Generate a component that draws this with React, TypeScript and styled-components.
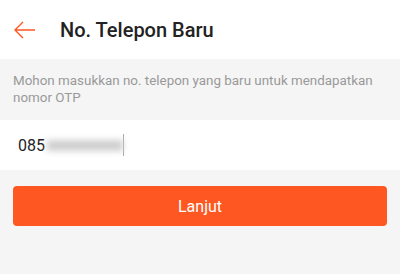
import styled, { createGlobalStyle } from "styled-components";

const Global = createGlobalStyle`
  html, body { margin: 0; padding: 0; background: #f5f5f5; }
  body { font-family: Roboto, "Noto Sans", sans-serif; }
`;

const Page = styled.div`
  width: 400px;
  height: 274px;
  display: flex;
  flex-direction: column;
  background: #f5f5f5;
`;

const Header = styled.header`
  height: 59px;
  background: #fff;
  display: flex;
  align-items: center;
  padding-left: 13px;
  box-sizing: border-box;
`;

const BackButton = styled.button`
  all: unset;
  display: flex;
  width: 24px;
  height: 24px;
  margin-right: 23px;
  cursor: pointer;
`;

const Title = styled.h1`
  margin: 0;
  font-size: 20px;
  font-weight: 500;
  color: #222;
`;

const Hint = styled.p`
  margin: 0;
  padding: 13px 13px 0;
  height: 61px;
  box-sizing: border-box;
  font-size: 13.4px;
  line-height: 17px;
  color: #999;
`;

const InputRow = styled.div`
  height: 50px;
  background: #fff;
  display: flex;
  align-items: center;
  padding-left: 18px;
  font-size: 16px;
  color: #222;
`;

const Masked = styled.span`
  display: inline-block;
  width: 76px;
  height: 11px;
  margin-left: 2px;
  background: #cfcfcf;
  filter: blur(3px);
`;

const Caret = styled.span`
  display: inline-block;
  width: 1px;
  height: 22px;
  background: #aaa;
`;

const Actions = styled.div`
  padding: 16px 13px;
`;

const SubmitButton = styled.button`
  width: 100%;
  height: 40px;
  border: none;
  border-radius: 4px;
  background: #ff5722;
  color: #fff;
  font-family: Roboto, sans-serif;
  font-size: 16px;
  cursor: pointer;
`;

export default function App() {
  return (
    <>
      <Global />
      <Page>
        <Header>
          <BackButton aria-label="Kembali">
            <svg width="24" height="24" viewBox="0 0 24 24" fill="none" stroke="#ff5722" strokeWidth="1.4">
              <path d="M22 12H2M10 4l-8 8 8 8" />
            </svg>
          </BackButton>
          <Title>No. Telepon Baru</Title>
        </Header>
        <Hint>Mohon masukkan no. telepon yang baru untuk mendapatkan nomor OTP</Hint>
        <InputRow>
          085
          <Masked />
          <Caret />
        </InputRow>
        <Actions>
          <SubmitButton>Lanjut</SubmitButton>
        </Actions>
      </Page>
    </>
  );
}
